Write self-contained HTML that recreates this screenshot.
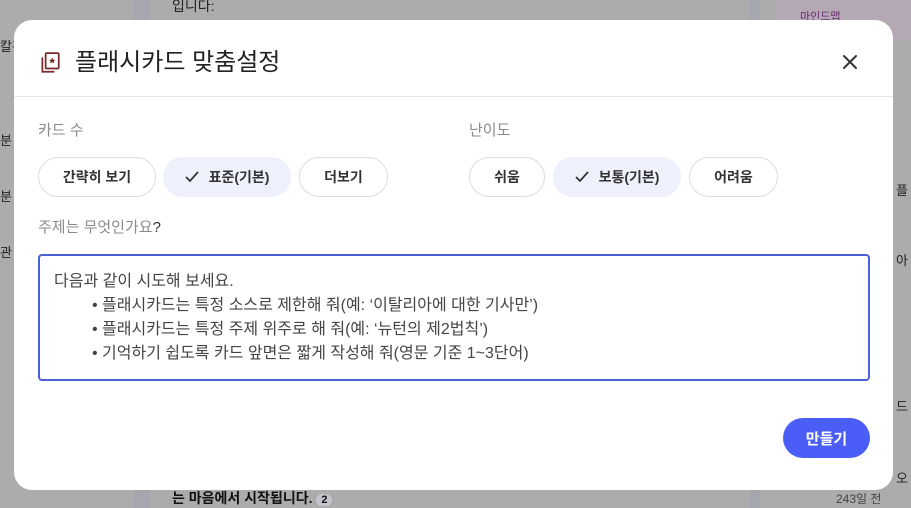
<!DOCTYPE html>
<html><head><meta charset="utf-8">
<style>
*{box-sizing:border-box;margin:0;padding:0}
body{width:911px;height:508px;overflow:hidden;background:#acacac;font-family:"Liberation Sans","Noto Sans CJK KR",sans-serif;position:relative}
.bg{position:absolute}
.modal{position:absolute;left:14px;top:20px;width:879px;height:470px;background:#fff;border-radius:18px}
.title{position:absolute;left:61px;top:27px;font-size:24px;color:#222;line-height:32px}
.icon{position:absolute;left:24px;top:31px}
.close{position:absolute;left:827px;top:33px}
.div{position:absolute;left:0;right:0;top:76px;height:1px;background:#e4e4e8}
.lbl{position:absolute;font-size:15px;color:#8a8a8a;line-height:20px}
.chip{position:absolute;top:137px;height:40px;border:1px solid #dcdce0;border-radius:20px;font-size:14px;font-weight:bold;color:#333;display:flex;align-items:center;justify-content:center;gap:10px}
.chip.sel{background:#eef0fb;border-color:#eef0fb}
.ta{position:absolute;left:24px;top:234px;width:832px;height:127px;border:2px solid #4c60d6;border-radius:4px;padding:14px 0 0 14px;font-size:16px;color:#444;line-height:24px}
.ta .b{padding-left:38px}
.btn{position:absolute;left:769px;top:398px;width:87px;height:40px;border-radius:20px;background:#4a5ef7;color:#fff;font-size:15px;font-weight:bold;display:flex;align-items:center;justify-content:center}
</style></head><body>
<div class="bg" style="left:134px;top:0;width:16px;height:508px;background:#a6a6ae"></div>
<div class="bg" style="left:750px;top:0;width:10px;height:508px;background:#a6a6ae"></div>
<div class="bg" style="left:775px;top:0;width:136px;height:40px;background:#b4a8b4"></div>
<div class="bg" style="left:172px;top:-4px;font-size:14px;color:#222">입니다:</div>
<div class="bg" style="left:800px;top:8px;font-size:11px;color:#6a2a70">마인드맵</div>
<div class="bg" style="left:172px;top:488px;font-size:14px;font-weight:bold;color:#111">는 마음에서 시작됩니다. <span style="font-size:11px;background:#c4c4cc;border-radius:8px;padding:0 5px">2</span></div>
<div class="bg" style="left:836px;top:490px;font-size:12px;color:#444">243일 전</div>
<div class="bg" style="left:0;top:36px;font-size:13px;color:#222">칼관</div>
<div class="bg" style="left:0;top:130px;font-size:13px;color:#222">분</div>
<div class="bg" style="left:0;top:186px;font-size:13px;color:#222">분</div>
<div class="bg" style="left:0;top:242px;font-size:13px;color:#222">관</div>
<div class="bg" style="left:896px;top:180px;font-size:13px;color:#222">플</div>
<div class="bg" style="left:896px;top:250px;font-size:13px;color:#222">아</div>
<div class="bg" style="left:896px;top:396px;font-size:13px;color:#222">드</div>
<div class="bg" style="left:896px;top:468px;font-size:13px;color:#222">오</div>

<div class="modal">
  <svg class="icon" width="24" height="24" viewBox="0 0 22 22" fill="none" stroke="#7a2a2a" stroke-width="1.6">
    <rect x="7" y="2" width="12" height="14" rx="1"/>
    <path d="M4 6 V19 H15"/>
    <path d="M13 6 l0.9 1.9 2 .2 -1.5 1.3 .5 2 -1.9-1.1 -1.9 1.1 .5-2 -1.5-1.3 2-.2z" fill="#7a2a2a" stroke="none"/>
  </svg>
  <div class="title">플래시카드 맞춤설정</div>
  <svg class="close" width="18" height="18" viewBox="0 0 18 18" stroke="#333" stroke-width="2" stroke-linecap="round"><path d="M3 3L15 15M15 3L3 15"/></svg>
  <div class="div"></div>

  <div class="lbl" style="left:24px;top:101px">카드 수</div>
  <div class="lbl" style="left:455px;top:101px">난이도</div>

  <div class="chip" style="left:24px;width:118px">간략히 보기</div>
  <div class="chip sel" style="left:149px;width:128px"><svg width="14" height="12" viewBox="0 0 14 12" fill="none" stroke="#333" stroke-width="1.8"><path d="M1 6l4 4 8-9"/></svg>표준(기본)</div>
  <div class="chip" style="left:285px;width:89px">더보기</div>

  <div class="chip" style="left:455px;width:76px">쉬움</div>
  <div class="chip sel" style="left:539px;width:128px"><svg width="14" height="12" viewBox="0 0 14 12" fill="none" stroke="#333" stroke-width="1.8"><path d="M1 6l4 4 8-9"/></svg>보통(기본)</div>
  <div class="chip" style="left:675px;width:89px">어려움</div>

  <div class="lbl" style="left:24px;top:198px">주제는 무엇인가요<span style="color:#333">?</span></div>

  <div class="ta">
    <div>다음과 같이 시도해 보세요.</div>
    <div class="b">• 플래시카드는 특정 소스로 제한해 줘(예: ‘이탈리아에 대한 기사만’)</div>
    <div class="b">• 플래시카드는 특정 주제 위주로 해 줘(예: ‘뉴턴의 제2법칙’)</div>
    <div class="b">• 기억하기 쉽도록 카드 앞면은 짧게 작성해 줘(영문 기준 1~3단어)</div>
  </div>

  <div class="btn">만들기</div>
</div>
</body></html>
